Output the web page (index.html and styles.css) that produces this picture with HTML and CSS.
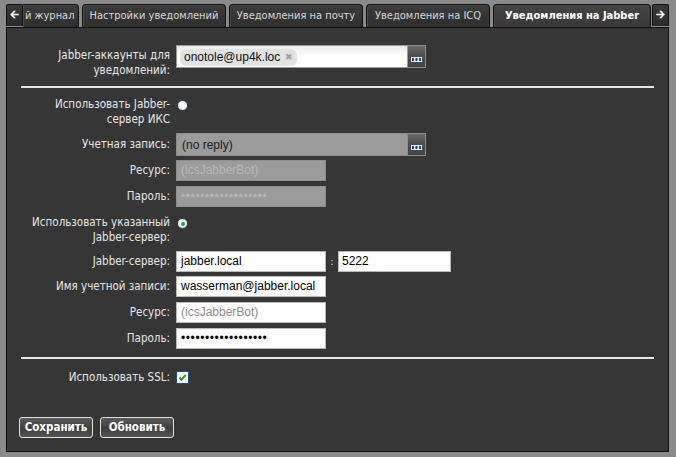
FILE: index.html
```html
<!DOCTYPE html>
<html lang="ru">
<head>
<meta charset="utf-8">
<title>Уведомления на Jabber</title>
<link rel="stylesheet" href="styles.css">
</head>
<body>
<div class="tabbar">
  <div class="scroll-btn">&#129128;</div>
  <div class="tab-viewport">
    <div class="tab tab-cut">й журнал</div>
    <div class="tab tab-w144">Настройки уведомлений</div>
    <div class="tab tab-w134">Уведомления на почту</div>
    <div class="tab tab-w124">Уведомления на ICQ</div>
    <div class="tab tab-active">Уведомления на Jabber</div>
  </div>
  <div class="scroll-btn">&#129130;</div>
</div>
<div class="panel">
  <div class="row row-first">
    <div class="label">Jabber-аккаунты для уведомлений:</div>
    <div class="combo">
      <div class="field field-tags"><span class="tag">onotole@up4k.loc <span class="tag-x">&#10006;</span></span></div>
      <div class="dots-btn"><svg width="11" height="5" viewBox="0 0 11 5"><rect width="11" height="5" fill="#e8ecf4"/><rect x="1" y="1" width="2" height="3" fill="#1f3f94"/><rect x="4.5" y="1" width="2" height="3" fill="#1f3f94"/><rect x="8" y="1" width="2" height="3" fill="#1f3f94"/></svg></div>
    </div>
  </div>
  <div class="sep"></div>
  <div class="row row-radio1">
    <div class="label">Использовать Jabber-<br>сервер ИКС</div>
    <span class="radio"></span>
  </div>
  <div class="row row-account">
    <div class="label">Учетная запись:</div>
    <div class="combo">
      <div class="field field-disabled field-combo">(no reply)</div>
      <div class="dots-btn"><svg width="11" height="5" viewBox="0 0 11 5"><rect width="11" height="5" fill="#e8ecf4"/><rect x="1" y="1" width="2" height="3" fill="#1f3f94"/><rect x="4.5" y="1" width="2" height="3" fill="#1f3f94"/><rect x="8" y="1" width="2" height="3" fill="#1f3f94"/></svg></div>
    </div>
  </div>
  <div class="row row-gap4">
    <div class="label">Ресурс:</div>
    <div class="field field-disabled field-short field-ph-dis">(icsJabberBot)</div>
  </div>
  <div class="row row-gap5">
    <div class="label">Пароль:</div>
    <div class="field field-disabled field-short field-pass-dis">&#8226;&#8226;&#8226;&#8226;&#8226;&#8226;&#8226;&#8226;&#8226;&#8226;&#8226;&#8226;&#8226;&#8226;&#8226;&#8226;&#8226;&#8226;</div>
  </div>
  <div class="row row-radio2">
    <div class="label">Использовать указанный<br>Jabber-сервер:</div>
    <span class="radio radio-on"></span>
  </div>
  <div class="row row-server">
    <div class="label">Jabber-сервер:</div>
    <div class="pair">
      <div class="field field-short">jabber.local</div>
      <span class="colon">:</span>
      <div class="field field-port">5222</div>
    </div>
  </div>
  <div class="row row-gap4">
    <div class="label">Имя учетной записи:</div>
    <div class="field field-short">wasserman@jabber.local</div>
  </div>
  <div class="row row-gap5">
    <div class="label">Ресурс:</div>
    <div class="field field-short field-ph">(icsJabberBot)</div>
  </div>
  <div class="row row-gap5">
    <div class="label">Пароль:</div>
    <div class="field field-short field-pass">&#8226;&#8226;&#8226;&#8226;&#8226;&#8226;&#8226;&#8226;&#8226;&#8226;&#8226;&#8226;&#8226;&#8226;&#8226;&#8226;&#8226;&#8226;</div>
  </div>
  <div class="sep"></div>
  <div class="row row-ssl">
    <div class="label">Использовать SSL:</div>
    <span class="checkbox"><svg width="11" height="11" viewBox="0 0 11 11"><path d="M2.5 5.5 L4.5 7.8 L8.8 2.8" fill="none" stroke="#21a121" stroke-width="2"/></svg></span>
  </div>
  <div class="buttons">
    <button class="btn">Сохранить</button>
    <button class="btn">Обновить</button>
  </div>
</div>
</body>
</html>
```
FILE: styles.css
```css
html, body {
  margin: 0;
  padding: 0;
  background: #8a8a8a;
}
body {
  font-family: "DejaVu Sans Condensed", "DejaVu Sans", sans-serif;
  font-stretch: condensed;
  font-size: 11px;
  color: #e6e6e6;
  width: 676px;
  height: 457px;
  overflow: hidden;
}
.tabbar {
  display: flex;
  margin: 4px 7px 0 6px;
  height: 23px;
  border-bottom: 1px solid #111;
}
.scroll-btn {
  width: 15px;
  height: 21px;
  border: 1px solid #111;
  border-bottom: none;
  background: linear-gradient(#3a3a3a, #2a2a2a);
  color: #fff;
  font-family: "DejaVu Sans", sans-serif;
  font-size: 11px;
  font-weight: bold;
  display: flex;
  align-items: center;
  justify-content: center;
  border-radius: 2px 2px 0 0;
  flex: none;
}
.tab-viewport {
  flex: 1;
  display: flex;
  gap: 3px;
  overflow: hidden;
  align-items: flex-start;
}
.tab {
  flex: none;
  box-sizing: border-box;
  height: 23px;
  padding: 0 6px;
  border: 1px solid #111;
  border-bottom: none;
  border-radius: 4px 4px 0 0;
  background: linear-gradient(#3c3c3c, #2e2e2e);
  box-shadow: inset 1px 1px 0 #4a4a4a;
  color: #d8d8d8;
  font-size: 11px;
  line-height: 22px;
  white-space: nowrap;
  text-align: center;
}
.tab-w144 { width: 144px; }
.tab-w134 { width: 134px; }
.tab-w124 { width: 124px; }
.tab-cut {
  border-left: none;
  border-radius: 0 4px 0 0;
  padding-left: 2px;
  width: 56px;
  text-align: left;
}
.tab-active {
  height: 24px;
  width: 158px;
  background: linear-gradient(#444, #383838);
  color: #fff;
  font-weight: bold;
  font-size: 11px;
  padding: 0 4px;
}
.panel {
  margin: 0 7px 0 6px;
  height: 424px;
  box-sizing: border-box;
  border: 1px solid #111;
  border-top: none;
  background: #363636;
  padding-top: 17px;
  display: flex;
  flex-direction: column;
}
.row {
  display: flex;
  align-items: flex-start;
  gap: 4px;
}
.label {
  width: 163px;
  padding-right: 2px;
  flex: none;
  text-align: right;
  font-size: 11.5px;
  line-height: 15px;
  padding-top: 3px;
  color: #e6e6e6;
}
.row-radio1 { margin-top: 9px; }
.row-radio1 .label, .row-radio2 .label { padding-top: 0; }
.row-account { margin-top: 6px; }
.row-account .label { padding-top: 4px; }
.row-gap4 { margin-top: 4px; }
.row-gap5 { margin-top: 5px; }
.row-radio2 { margin-top: 8px; }
.row-server { margin-top: 6px; }
.row-ssl { margin-top: 11px; }
.row-ssl .label { padding-top: 0; }

.sep {
  height: 2px;
  background: #e6e6e6;
  margin: 8px 14px 0 14px;
}
.combo, .pair {
  display: flex;
}
.field {
  box-sizing: border-box;
  height: 21px;
  border: 1px solid #b8b8b8;
  background: #fff;
  color: #000;
  font-family: "Liberation Sans", Arial, sans-serif;
  font-size: 12px;
  line-height: 19px;
  padding: 0 4px;
  white-space: nowrap;
  overflow: hidden;
}
.field-tags {
  width: 232px;
  height: 23px;
  padding: 2px 3px;
  background: linear-gradient(#e9e9e9, #fff 45%);
  border-color: #9a9a9a;
}
.tag {
  display: inline-block;
  height: 17px;
  line-height: 17px;
  padding: 0 4px;
  background: #e2e2e2;
  border-radius: 6px;
  color: #111;
}
.tag-x {
  color: #98a0aa;
  font-size: 9px;
  vertical-align: 1px;
  margin-left: 1px;
}
.dots-btn {
  width: 18px;
  height: 23px;
  box-sizing: border-box;
  border: 1px solid #8c8c8c;
  border-left: none;
  background: linear-gradient(#6a6a6a, #4c4c4c 50%, #444);
  display: flex;
  align-items: flex-end;
  justify-content: center;
  padding-bottom: 5px;
}
.dots-btn svg { display: block; }
.field-combo {
  width: 232px;
  height: 23px;
  line-height: 22px;
  padding-left: 5px;
}
.field-disabled {
  background: #9b9b9b;
  border-color: #8d8d8d;
  color: #1a1a1a;
}
.field-short { width: 150px; padding-left: 4px; }
.field-ph { color: #8c8c8c; }
.field-ph-dis { color: #b9b9b9; }
.field-pass {
  font-size: 12px;
  letter-spacing: 0.6px;
  color: #000;
}
.field-pass-dis {
  font-size: 12px;
  letter-spacing: 0.6px;
  color: #b4b4b4;
}
.field-port { width: 113px; padding-left: 3px; }
.colon {
  line-height: 21px;
  width: 12px;
  text-align: center;
  color: #e6e6e6;
}
.radio {
  width: 11px;
  height: 11px;
  box-sizing: border-box;
  border-radius: 50%;
  border: 1px solid #1e4f86;
  background: radial-gradient(circle at 45% 40%, #ffffff 30%, #dcdcdc 100%);
  margin-top: 3px;
  margin-left: 1px;
  display: flex;
  align-items: center;
  justify-content: center;
}
.radio-on::after {
  content: "";
  width: 4px;
  height: 4px;
  border-radius: 50%;
  background: #22a82a;
}
.checkbox {
  width: 13px;
  height: 13px;
  box-sizing: border-box;
  border: 1px solid #1c5180;
  background: #fff;
  display: flex;
  align-items: center;
  justify-content: center;
  margin-top: 1px;
}
.checkbox svg { display: block; }
.buttons {
  display: flex;
  gap: 7px;
  margin: 32px 0 0 12px;
}
.btn {
  width: 74px;
  height: 21px;
  box-sizing: border-box;
  border: 1px solid #e0e0e0;
  border-radius: 3px;
  background: linear-gradient(#5a5a5a, #3e3e3e 55%, #555);
  color: #fff;
  font-family: "DejaVu Sans Condensed", "DejaVu Sans", sans-serif;
  font-stretch: condensed;
  font-weight: bold;
  font-size: 11.5px;
  padding: 0;
  line-height: 19px;
}
```
